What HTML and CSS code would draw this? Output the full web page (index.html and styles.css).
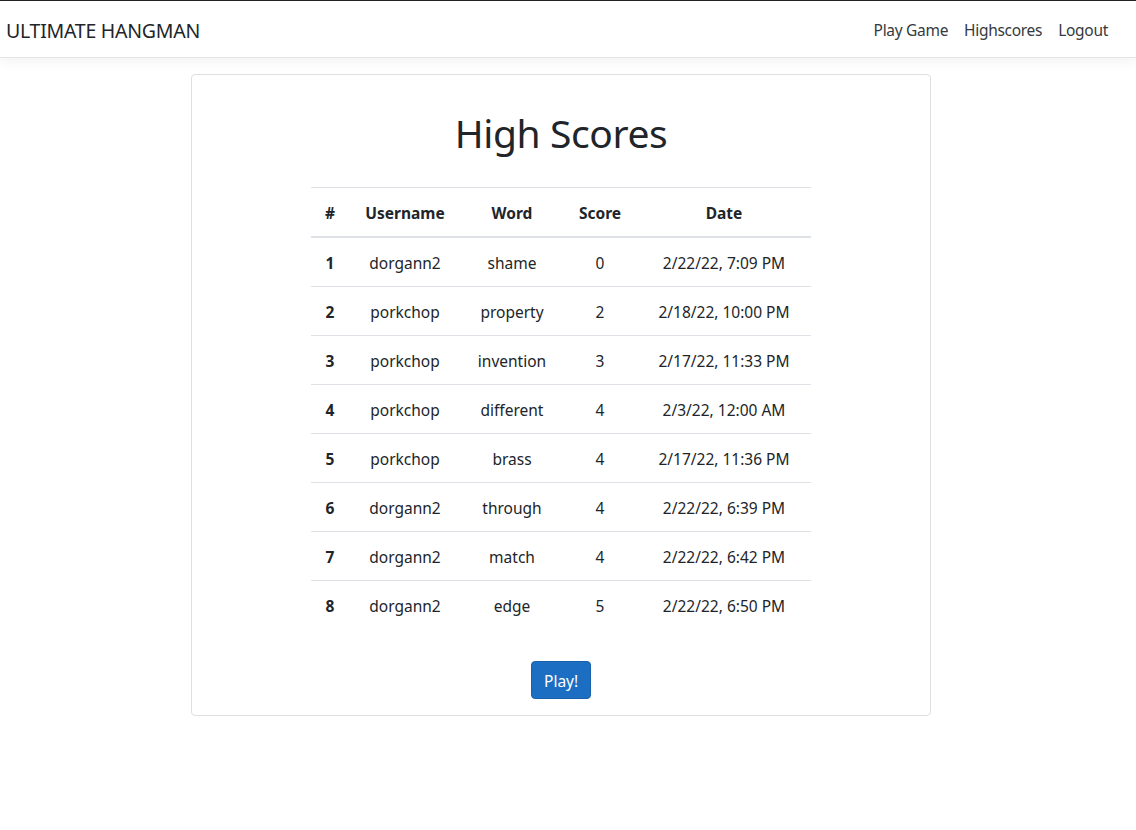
FILE: index.html
```html
<!DOCTYPE html>
<html lang="en">
<head>
<meta charset="utf-8">
<title>Ultimate Hangman</title>
<link rel="stylesheet" href="styles.css">
</head>
<body>
<header class="navbar">
  <a class="brand" href="#">ULTIMATE HANGMAN</a>
  <nav class="nav">
    <a class="nav-link" href="#">Play Game</a>
    <a class="nav-link" href="#">Highscores</a>
    <a class="nav-link" href="#">Logout</a>
  </nav>
</header>
<main class="page">
  <section class="card">
    <h1 class="title">High Scores</h1>
    <table class="scores">
      <colgroup>
        <col class="c-rank"><col class="c-user"><col class="c-word"><col class="c-score"><col class="c-date">
      </colgroup>
      <thead>
        <tr><th>#</th><th>Username</th><th>Word</th><th>Score</th><th>Date</th></tr>
      </thead>
      <tbody>
        <tr><th>1</th><td>dorgann2</td><td>shame</td><td>0</td><td>2/22/22, 7:09 PM</td></tr>
        <tr><th>2</th><td>porkchop</td><td>property</td><td>2</td><td>2/18/22, 10:00 PM</td></tr>
        <tr><th>3</th><td>porkchop</td><td>invention</td><td>3</td><td>2/17/22, 11:33 PM</td></tr>
        <tr><th>4</th><td>porkchop</td><td>different</td><td>4</td><td>2/3/22, 12:00 AM</td></tr>
        <tr><th>5</th><td>porkchop</td><td>brass</td><td>4</td><td>2/17/22, 11:36 PM</td></tr>
        <tr><th>6</th><td>dorgann2</td><td>through</td><td>4</td><td>2/22/22, 6:39 PM</td></tr>
        <tr><th>7</th><td>dorgann2</td><td>match</td><td>4</td><td>2/22/22, 6:42 PM</td></tr>
        <tr><th>8</th><td>dorgann2</td><td>edge</td><td>5</td><td>2/22/22, 6:50 PM</td></tr>
      </tbody>
    </table>
    <div class="actions">
      <button class="btn" type="button">Play!</button>
    </div>
  </section>
</main>
</body>
</html>
```

FILE: styles.css
```css
* { box-sizing: border-box; }
html, body {
  margin: 0;
  padding: 0;
  background: #fff;
  color: #212529;
  font-family: "Noto Sans", "Open Sans", sans-serif;
  font-size: 16px;
  line-height: 1.5;
}
.navbar {
  display: flex;
  align-items: center;
  justify-content: space-between;
  height: 58px;
  border-top: 1px solid #222;
  border-bottom: 1px solid #e5e5e5;
  box-shadow: 0 4px 12px rgba(0, 0, 0, 0.05);
  padding: 3px 20px 0 6px;
  margin-bottom: 16px;
}
.brand {
  font-size: 19.5px;
  color: #212529;
  text-decoration: none;
  line-height: 30px;
  letter-spacing: -0.25px;
}
.nav {
  display: flex;
}
.nav-link {
  color: #343a40;
  text-decoration: none;
  padding: 8px 8px;
  font-size: 15.5px;
  letter-spacing: -0.3px;
}
.page {
  padding-left: 191px;
}
.card {
  width: 740px;
  border: 1px solid #dfdfdf;
  border-radius: 4px;
  padding: 16px;
}
.title {
  text-align: center;
  font-size: 39px;
  font-weight: 400;
  line-height: 48px;
  margin: 18px 0 30px;
  letter-spacing: -0.4px;
}
.scores {
  width: 500px;
  margin: 0 auto;
  border-collapse: collapse;
  table-layout: fixed;
  text-align: center;
}
.c-rank { width: 38px; }
.c-user { width: 112px; }
.c-word { width: 102px; }
.c-score { width: 74px; }
.c-date { width: 174px; }
.scores th, .scores td {
  padding: 13px 0 11px;
  line-height: 24px;
  font-size: 15.5px;
  white-space: nowrap;
}
.scores thead tr {
  border-top: 1px solid #dee2e6;
  border-bottom: 2px solid #dee2e6;
}
.scores tbody tr {
  border-bottom: 1px solid #dee2e6;
}
.scores tbody tr:last-child {
  border-bottom: none;
}
.scores th { font-weight: 700; }
.actions {
  display: flex;
  justify-content: center;
  margin-top: 32px;
}
.btn {
  font-family: inherit;
  font-size: 15.5px;
  line-height: 24px;
  color: #fff;
  background: #1b6ec2;
  border: 1px solid #1861ac;
  border-radius: 4px;
  padding: 7px 12px 5px;
  height: 38px;
  width: 60px;
}
```
